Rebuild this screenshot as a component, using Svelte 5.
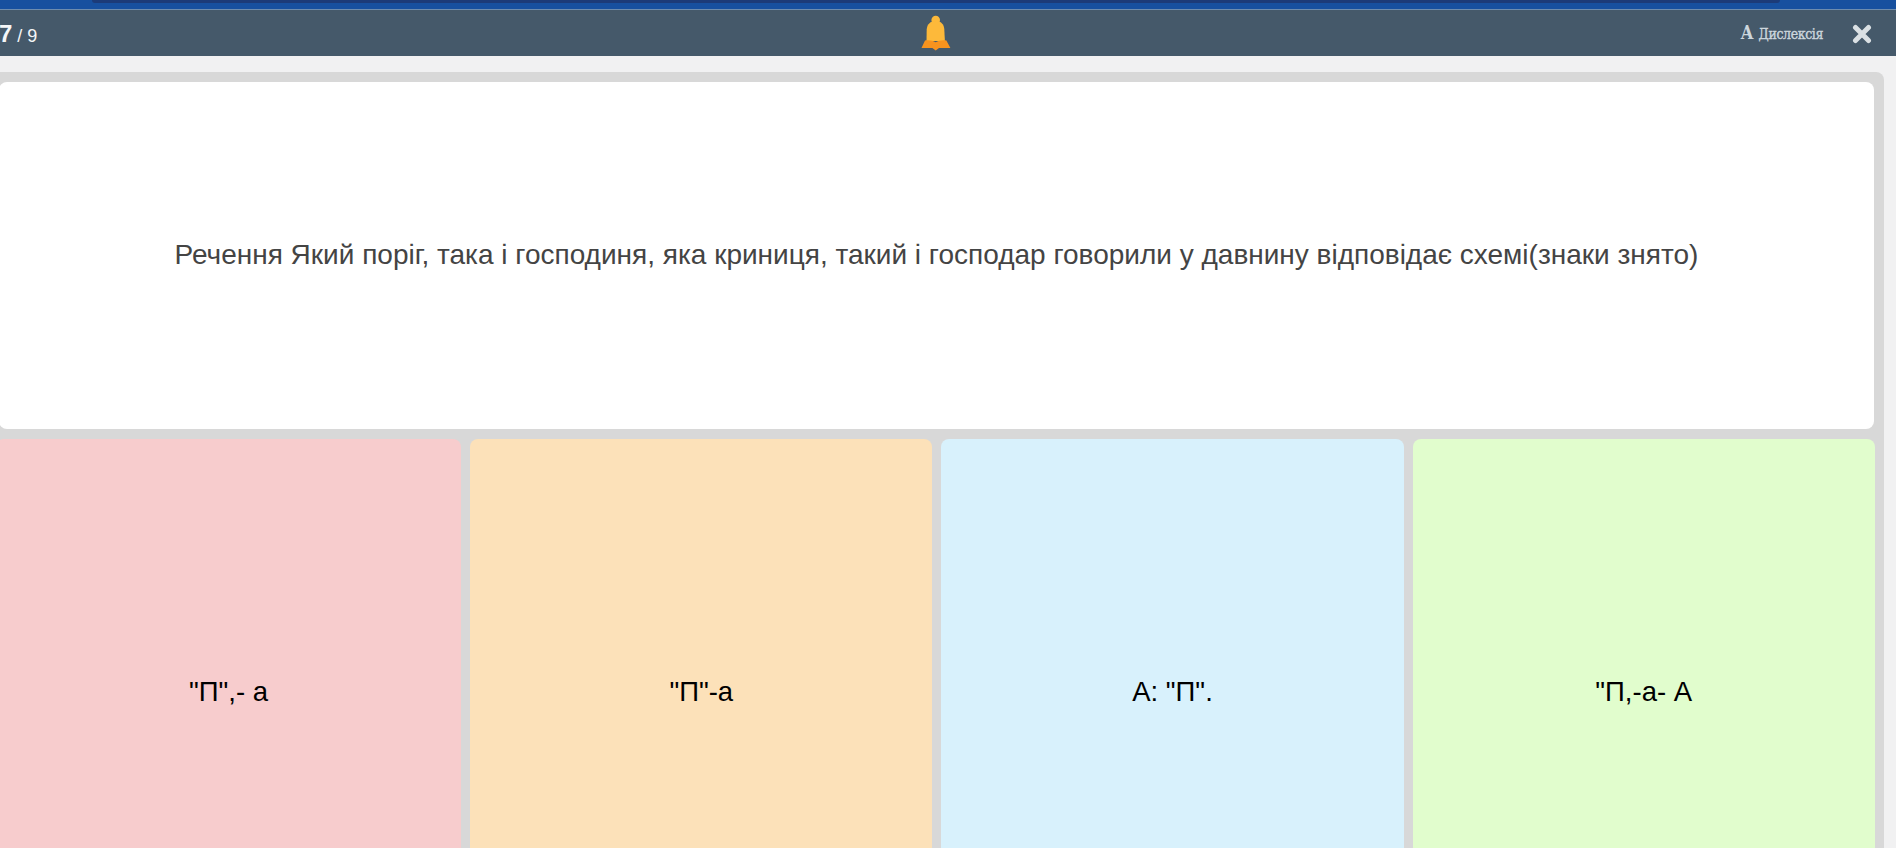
<script>
  const options = [
    { label: '"П",- а', tone: 'red' },
    { label: '"П"-а', tone: 'orange' },
    { label: 'А: "П".', tone: 'blue' },
    { label: '"П,-а- А', tone: 'green' }
  ];
</script>

<div class="page">
  <div class="browser-strip"><div class="strip-inner"></div></div>
  <header class="topbar">
    <div class="counter"><strong>7</strong> / 9</div>
    <svg class="bell" viewBox="0 0 30 36" width="30" height="36" aria-hidden="true">
      <circle cx="14.700" cy="5" r="4.300" fill="#fdb93a" />
      <path d="M14.700 6c-5.500 0-8.700 3.500-9 8.500L5.500 26h18.400l-.6-11.500C23 9.500 20.200 6 14.700 6z" fill="#fdb93a" />
      <path d="M4 25.500c4-.7 8 0 10.700 1.800 2.700-1.800 6.700-2.500 10.700-1.800l4 7.500H18l-3.300 2.500-3.300-2.500H0.500z" fill="#f7931e" />
    </svg>
    <div class="tools">
      <span class="dys"><b>A</b> <span class="dys-word">Дислексія</span></span>
      <svg class="close" viewBox="0 0 20 20" width="20" height="20" aria-hidden="true">
        <path d="M3.500 3.500l13 13M16.500 3.500l-13 13" stroke="#dae0e4" stroke-width="5" stroke-linecap="round" />
      </svg>
    </div>
  </header>

  <main class="panel">
    <section class="question">
      Речення Який поріг, така і господиня, яка криниця, такий і господар говорили у давнину відповідає схемі(знаки знято)
    </section>
    <section class="answers">
      {#each options as o}
        <div class="answer {o.tone}">{o.label}</div>
      {/each}
    </section>
  </main>
</div>

<style>
  :global(body) {
    margin: 0;
    background: #f1f1f2;
    overflow: hidden;
  }
  .page {
    width: 1896px;
    height: 848px;
    overflow: hidden;
    font-family: "Liberation Sans", Arial, sans-serif;
  }
  .browser-strip {
    height: 9px;
    background: #17509f;
    border-bottom: 1px solid #6d8cae;
    box-sizing: content-box;
    padding: 0 116px 0 92px;
  }
  .strip-inner {
    height: 3px;
    background: #1c3b78;
    border-radius: 0 0 6px 6px;
  }
  .topbar {
    height: 46px;
    background: #45596a;
    display: flex;
    align-items: center;
    justify-content: space-between;
    position: relative;
    color: #f4f6f8;
  }
  .counter {
    font-size: 18px;
    margin: 2px 0 0 -1px;
  }
  .counter strong {
    font-size: 24px;
  }
  .bell {
    position: absolute;
    left: 921px;
    top: 5px;
  }
  .tools {
    display: flex;
    align-items: center;
    gap: 29px;
    padding-right: 24px;
  }
  .dys {
    font-family: "DejaVu Serif", "Liberation Serif", serif;
    font-stretch: condensed;
    font-size: 18px;
    color: #ccd6dd;
    line-height: 1;
  }
  .dys-word {
    font-size: 14px;
    letter-spacing: -0.4px;
    -webkit-text-stroke: 0.35px #ccd6dd;
  }
  .close {
    margin-top: 2px;
  }
  .panel {
    margin: 16px 12px 0 -9px;
    background: #d8d8d8;
    border-radius: 8px 8px 0 0;
    padding: 10px 9.200px 0 8px;
    height: 800px;
    box-sizing: border-box;
  }
  .question {
    height: 347px;
    margin-right: 1px;
    padding-bottom: 2px;
    box-sizing: border-box;
    background: #fff;
    border-radius: 8px;
    display: flex;
    align-items: center;
    justify-content: center;
    font-size: 28px;
    color: #444;
  }
  .answers {
    display: grid;
    grid-template-columns: repeat(4, 1fr);
    gap: 9px;
    margin-top: 10px;
  }
  .answer {
    height: 506px;
    border-radius: 8px;
    display: flex;
    align-items: center;
    justify-content: center;
    font-size: 27.500px;
    color: #000;
  }
  .red { background: #f7cccd; margin-left: -3px; }
  .orange { background: #fce1b9; }
  .blue { background: #d8f1fc; }
  .green { background: #e1fdcd; }
</style>
